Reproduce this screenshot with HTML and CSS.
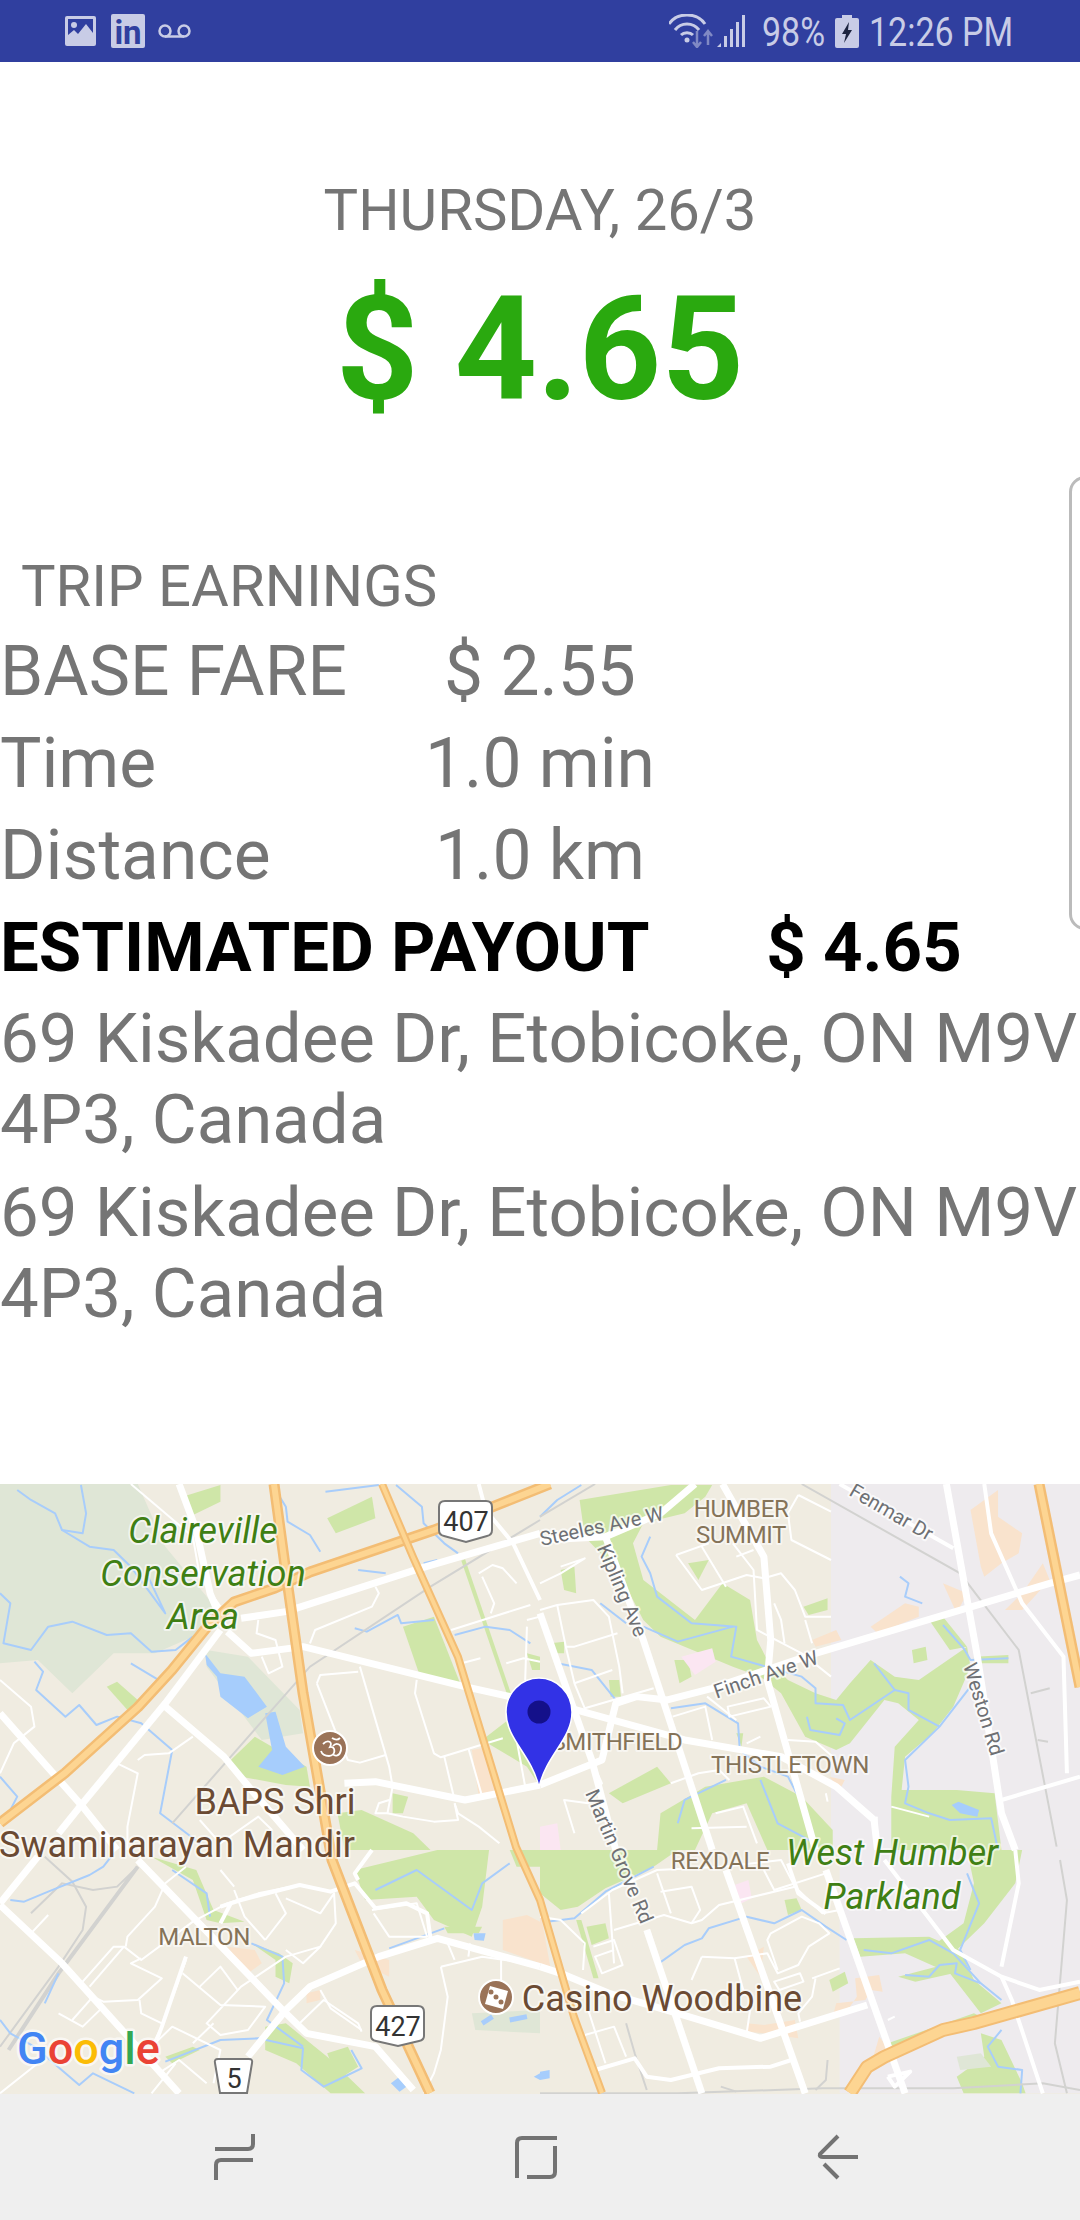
FILE: index.html
```html
<!DOCTYPE html>
<html lang="en">
<head>
    <meta charset="UTF-8">
    <meta name="viewport" content="width=device-width, initial-scale=1.0">
    <title>Trip Details</title>
    <link rel="stylesheet" href="styles.css">
</head>
<body>
    <div class="screen">
        <!-- Status bar -->
        <header class="status-bar">
            <div class="status-left">
                <svg class="ic-image" viewBox="0 0 31 30">
                    <rect width="31" height="30" rx="2" fill="#c8cce6"/>
                    <rect x="3" y="3" width="25" height="22" fill="#303f9f"/>
                    <path d="M3 25 L3 19 L9 14 L13 18 L21 8 L28 17 L28 25 Z" fill="#c8cce6"/>
                    <circle cx="9" cy="9" r="3" fill="#c8cce6"/>
                </svg>
                <div class="ic-linkedin">in</div>
                <svg class="ic-voicemail" viewBox="0 0 33 14">
                    <circle cx="7" cy="7" r="5.500"/>
                    <circle cx="26" cy="7" r="5.500"/>
                    <path d="M7 12.500 H26"/>
                </svg>
            </div>
            <div class="status-right">
                <svg class="ic-wifi" viewBox="0 0 45 34">
                    <path class="arc" d="M0 10 C8 -2 28 -2 36 10"/>
                    <path class="arc" d="M6 16 C12 8 24 8 30 16"/>
                    <path class="arc" d="M12 21 C15 18 21 18 24 21"/>
                    <circle cx="18" cy="26" r="2.500" fill="#c8cce6"/>
                    <path class="arrow" d="M28 17 V33 M24 28 L28 33 L32 28"/>
                    <path class="arrow" d="M39 31 V17 M35 22 L39 17 L43 22"/>
                </svg>
                <svg class="ic-signal" viewBox="0 0 32 32" fill="#c8cce6">
                    <path d="M0 32 L4 28 V32 Z"/>
                    <rect x="7" y="21" width="3" height="11"/>
                    <rect x="13" y="14" width="3" height="18"/>
                    <rect x="19" y="7" width="3" height="25"/>
                    <rect x="25" y="0" width="3" height="32"/>
                </svg>
                <span class="status-text status-pct">98%</span>
                <svg class="ic-battery" viewBox="0 0 24 33">
                    <path d="M7 0 H17 V3 H22 Q24 3 24 5 V31 Q24 33 22 33 H2 Q0 33 0 31 V5 Q0 3 2 3 H7 Z" fill="#c8cce6"/>
                    <path d="M14 7 L7 19 H11 L9 28 L17 15 H13 Z" fill="#1c2440"/>
                </svg>
                <span class="status-text status-time">12:26 PM</span>
            </div>
        </header>

        <main class="content">
            <section class="summary">
                <div class="summary-date">THURSDAY, 26/3</div>
                <div class="summary-amount">$ 4.65</div>
            </section>

            <section class="earnings">
                <h2 class="earnings-title">TRIP EARNINGS</h2>
                <div class="fare-row"><span>BASE FARE</span><span class="fare-value">$ 2.55</span></div>
                <div class="fare-row"><span>Time</span><span class="fare-value">1.0 min</span></div>
                <div class="fare-row"><span>Distance</span><span class="fare-value">1.0 km</span></div>
                <div class="fare-row payout"><span>ESTIMATED PAYOUT</span><span class="fare-value">$ 4.65</span></div>
                <p class="address">69 Kiskadee Dr, Etobicoke, ON M9V 4P3, Canada</p>
                <p class="address">69 Kiskadee Dr, Etobicoke, ON M9V 4P3, Canada</p>
            </section>

            <div class="side-tab"></div>
        </main>

        <!-- Map -->
        <svg class="map" viewBox="0 0 1080 610">
            <rect width="1080" height="610" fill="#f0ece1"/>

            <!-- areas and water, top left -->
            <g transform="translate(0,-4) scale(.3444,.3333)">
                <path class="wood" d="M0 12 H400 L480 200 L640 400 L560 470 L450 520 L330 520 L210 640 L110 540 L0 550 Z"/>
                <path class="wood" d="M600 510 L720 530 L870 690 L880 760 L760 780 L600 560 Z"/>
                <path class="park" d="M530 50 L640 15 L640 65 L550 110 Z"/>
                <path class="park" d="M950 115 L1080 50 L1090 115 L975 160 Z"/>
                <path class="park" d="M1170 440 L1260 410 L1340 620 L1220 590 Z"/>
                <path class="park" d="M670 840 L740 770 L890 860 L900 920 L830 915 L700 890 Z"/>
                <path class="park" d="M1140 940 L1185 950 L1170 1000 L1140 1000 Z"/>
                <path class="park" d="M980 1000 L1050 990 L1200 1060 L1250 1110 L1000 1110 Z"/>
                <path class="park" d="M310 620 L340 605 L400 660 L370 690 Z"/>
                <path class="park" d="M1530 520 L1568 530 V570 L1545 570 Z"/>
                <path class="park" d="M1400 780 L1500 700 L1568 850 V920 L1530 860 Z"/>
                <path class="peach" d="M1370 810 L1420 800 L1450 940 L1390 950 Z"/>
                <path class="park-line" d="M1345 240 L1550 860"/>
                <path class="lake" d="M595 520 L640 580 L710 590 L775 680 L720 715 L640 650 L630 590 L600 555 Z"/>
                <path class="lake" d="M770 700 L800 695 L830 800 L885 860 L820 885 L750 860 L790 810 Z"/>
                <path class="river" d="M50 30 L90 60 L160 100 L180 150 L240 160 L250 100 L235 15"/>
                <path class="river" d="M180 150 L260 200 L330 210 L380 260 L480 400 L430 290"/>
                <path class="river" d="M0 340 L30 370 L10 490 L90 510 L140 440 L210 425 L310 465 L380 460 L440 515 L510 510 L560 470"/>
                <path class="river" d="M100 545 L125 575 L105 630 L190 710 L230 675 L280 735 L340 710 L410 730 L500 810 L465 1000 L580 1090"/>
                <path class="river" d="M380 550 L460 600"/>
                <path class="river" d="M0 890 L50 950 L20 1010"/>
                <path class="river" d="M800 30 L830 80 L835 125 L900 165 L930 215"/>
                <path class="river" d="M945 35 L1100 15 M1040 270 L1120 280 M1230 250 L1270 240"/>
                <path class="river" d="M1150 15 L1225 80 L1230 130 L1290 190 L1330 220"/>
                <path class="river" d="M1030 445 L1065 455 L1155 405 L1165 430 L1260 420"/>
                <path class="river" d="M1320 465 L1410 440 L1480 450 L1540 490"/>
                <path class="rail" d="M500 1030 L900 560 L1250 320 L1568 120"/>
            </g>

            <!-- areas and water, top right -->
            <g transform="translate(540,-4) scale(.3444,.3333)">
                <rect x="845" y="12" width="723" height="1098" fill="#eeebee"/>
                <path class="park" d="M115 60 L380 15 L500 15 L480 50 L420 100 L300 130 L270 190 L300 300 L350 340 L450 420 L530 310 L610 360 L630 480 L660 540 L720 600 L800 640 L860 660 L900 610 L960 540 L1030 590 L1100 600 L1240 500 L1250 560 L1200 680 L1140 760 L1060 830 L1050 930 L1210 930 L1320 940 L1340 1110 L1020 1110 L1020 950 L1030 800 L1100 720 L1040 670 L1000 660 L900 790 L860 810 L770 770 L700 640 L640 590 L560 560 L420 500 L350 470 L300 420 L230 280 L130 170 Z"/>
                <path class="park" d="M60 270 L100 260 L105 340 L70 330 Z"/>
                <path class="park" d="M30 490 L70 485 L70 520 L30 520 Z"/>
                <path class="park" d="M200 600 L230 600 L235 650 L205 650 Z"/>
                <path class="park" d="M390 540 L430 540 L440 590 L405 610 Z"/>
                <path class="park" d="M765 380 L835 355 L835 390 L780 405 Z"/>
                <path class="park" d="M1080 510 L1120 500 L1125 540 L1085 550 Z"/>
                <path class="park" d="M1130 420 L1170 410 L1240 500 L1190 510 Z"/>
                <path class="park" d="M1260 530 L1360 525 L1360 550 L1260 550 Z"/>
                <path class="park" d="M430 250 L490 240 L460 300 Z"/>
                <path class="park" d="M200 940 L340 860 L380 910 L240 970 Z"/>
                <path class="park" d="M350 1000 L480 920 L650 890 L760 950 L850 1050 V1110 L340 1110 Z"/>
                <path class="land" d="M500 1000 L600 970 L660 1110 H450 Z"/>
                <path class="park" d="M570 760 L590 760 L585 800 Z"/>
                <path class="blush" d="M410 530 L500 505 L510 545 L450 585 Z"/>
                <path class="blush" d="M0 1040 L50 1030 L60 1110 H0 Z"/>
                <path class="peach" d="M790 480 L860 450 L875 480 L800 500 Z"/>
                <path class="peach" d="M960 440 L1060 370 L1100 380 L1100 410 L980 460 Z"/>
                <path class="peach" d="M1170 310 L1240 340 L1210 400 Z"/>
                <path class="peach" d="M1250 90 L1330 30 L1330 110 L1400 160 L1390 220 L1340 250 L1290 290 L1280 260 Z"/>
                <path class="peach" d="M1350 390 L1400 340 L1460 250 L1480 300 L1400 390 Z"/>
                <path class="peach" d="M840 890 L885 900 L870 930 Z"/>
                <path class="river" d="M0 110 L50 60 L120 15"/>
                <path class="river" d="M320 170 L295 230 L320 280 L340 350 L440 430 L570 440 L555 530 L640 555 L760 590 L800 625 L800 670 L880 675 L900 720 L1030 630 L1070 640 L1070 690 L1160 740 L1250 620 M1160 740 L1060 840 L1070 920 L1060 970 L1130 1000 L1190 1020 L1310 1015 L1330 1110"/>
                <path class="river" d="M775 710 L785 750 L870 765 L885 730 L860 715"/>
                <path class="river" d="M970 550 L1030 630"/>
                <path class="river" d="M175 370 L250 430 M300 440 L400 485 L560 440"/>
                <path class="river" d="M50 550 L150 570 L220 660"/>
                <path class="river" d="M380 685 L480 670 L575 730 L580 810 L640 860 L720 890 L745 940"/>
                <path class="river" d="M400 1030 L420 960 L540 900 M640 900 L690 1030 L800 1090"/>
                <path class="river" d="M1045 290 L1070 310 L1060 350 L1110 370"/>
                <path class="river" d="M1170 435 L1230 505 L1250 540 L1360 535"/>
                <path class="lake" d="M1195 975 L1215 965 L1275 990 L1270 1010 L1220 1000 Z"/>
                <path class="rail" d="M760 12 L1220 280 L1390 510 L1500 1100"/>
                <path class="rail" d="M1425 640 L1480 625 M1445 780 L1475 785"/>
                <path class="rail" d="M0 110 L160 12"/>
            </g>

            <!-- areas and water, bottom left -->
            <g transform="translate(0,366) scale(.3444,.3333)">
                <path class="park" d="M440 20 L570 60 L620 180 L710 215 L640 220 L600 210 L560 90 Z"/>
                <path class="park" d="M730 280 L810 310 L850 340 L840 400 L800 380 L800 330 Z"/>
                <path class="park" d="M770 530 L830 520 L950 620 L1060 730 L960 730 L860 640 L770 600 Z"/>
                <path class="park" d="M950 610 L1010 590 L1040 650 L980 690 Z"/>
                <path class="park" d="M480 620 L560 590 L580 600 L500 640 Z"/>
                <path class="park" d="M1030 60 L1270 0 L1420 0 L1400 170 L1370 260 L1260 210 L1210 140 L1060 150 Z"/>
                <path class="park" d="M1290 230 L1400 230 L1390 250 L1300 250 Z"/>
                <path class="park" d="M1480 0 L1568 0 V50 L1500 50 Z"/>
                <path class="peach" d="M660 290 L740 300 L760 340 L720 370 Z"/>
                <path class="peach" d="M1460 210 L1530 195 L1568 215 V340 L1460 300 Z"/>
                <path class="peach" d="M890 430 L930 420 L930 450 L890 460 Z"/>
                <path class="peach" d="M1030 300 L1130 330 L1130 380 L1050 340 Z"/>
                <path class="wood" d="M1370 490 L1568 480 V550 L1380 540 Z"/>
                <path class="rail" d="M0 590 L170 350 L240 240 L250 170 L210 95 L130 20"/>
                <path class="rail rail-wide" d="M25 600 L170 370 L400 50"/>
                <path class="rail" d="M90 190 L180 100 L270 120 L340 110 L400 50"/>
                <path class="river" d="M30 150 L70 155 L140 125 L260 75 L300 50 L330 10"/>
                <path class="river" d="M0 510 L30 550 L100 590 L230 705 L270 670 L390 730"/>
                <path class="river" d="M480 635 L640 570 L750 565 L880 595 L875 660 L940 710 L980 690 L1050 655 L1020 600"/>
                <path class="river" d="M730 280 L820 320 L825 400 L775 510 L880 590"/>
                <path class="river" d="M500 60 L600 130 L610 200"/>
                <path class="river" d="M1130 295 L1290 235 M1090 120 L1210 60 L1370 180 L1400 100 L1480 40"/>
                <path class="river" d="M170 370 L130 460"/>
                <path class="river-wide" d="M1400 520 L1430 500 M1480 510 L1530 500"/>
                <path class="lake" d="M1375 250 L1410 250 L1405 272 L1378 270 Z"/>
                <path class="lake" d="M1135 700 L1160 680 L1180 710 L1160 725 Z"/>
                <path class="lake" d="M1550 680 L1568 670 V690 Z"/>
            </g>

            <!-- areas and water, bottom right -->
            <g transform="translate(540,366) scale(.3444,.3333)">
                <rect x="870" y="0" width="698" height="730" fill="#eeebee"/>
                <path class="park" d="M0 0 H400 L330 50 L190 115 L110 170 L60 180 L0 130 Z"/>
                <path class="park" d="M710 150 L745 145 L760 180 L720 195 Z"/>
                <path class="park" d="M135 230 L190 220 L200 265 L150 285 Z"/>
                <path class="park" d="M105 210 L120 210 L170 385 L155 385 Z"/>
                <path class="park" d="M840 390 L885 365 L895 400 L850 425 Z"/>
                <path class="park" d="M1240 0 H1400 L1380 100 L1290 220 L1210 300 L1150 280 L1230 220 L1260 100 Z"/>
                <path class="park" d="M910 265 L1130 260 L1220 300 L1260 390 L1340 460 L1280 490 L1190 370 L1060 310 L930 320 Z"/>
                <path class="park" d="M1040 380 L1170 345 L1200 370 L1090 395 Z"/>
                <path class="park" d="M1010 580 L1260 490 L1280 500 L1040 610 Z"/>
                <path class="park" d="M1280 550 L1340 570 L1400 700 L1410 730 H1230 L1210 680 L1290 620 Z"/>
                <path class="wood" d="M1210 620 L1280 610 L1310 650 L1220 660 Z"/>
                <path class="blush" d="M565 105 L605 90 L615 145 L585 160 Z"/>
                <path class="peach" d="M915 385 L985 375 L995 425 L960 420 L945 450 L860 460 L850 500 L900 470 L920 440 Z"/>
                <path class="peach" d="M600 520 L650 525 L740 510 L750 565 L650 550 L605 545 Z"/>
                <path class="peach" d="M600 320 L650 290 L640 380 Z"/>
                <path class="peach" d="M965 630 L985 560 L1015 600 Z"/>
                <path class="peach" d="M0 180 L30 350 L0 340 Z"/>
                <path class="river" d="M20 215 L100 205 L190 125 L330 50"/>
                <path class="river" d="M345 340 L420 285 L470 265 L490 235 L600 200 L680 220 L760 180 L830 230 L890 270"/>
                <path class="river" d="M940 300 L1020 310 L1130 270 L1200 310 L1280 400 L1340 450"/>
                <path class="river" d="M1060 375 L1130 380 L1160 345 L1210 340 L1205 370 L1280 400"/>
                <path class="river" d="M1240 70 L1275 160 L1220 300 L1250 360"/>
                <path class="river" d="M1340 540 L1300 590 L1330 650 L1400 660 L1395 730"/>
                <path class="lake" d="M0 665 L28 660 L28 685 L0 690 Z"/>
                <path class="rail" d="M0 730 H400 L820 715 H1200 L1460 700 L1568 720"/>
                <path class="rail" d="M250 520 L275 610 L310 720 M525 710 L570 725 M835 630 L830 690 L800 720"/>
                <path class="rail" d="M1510 30 L1530 150 L1495 580 L1530 730"/>
            </g>

            <!-- roads, top left -->
            <g transform="translate(0,-4) scale(.3444,.3333)">
                <path class="minor" d="M380 12 L560 170 L580 290 L640 380"/>
                <path class="minor" d="M750 420 L745 460 L800 480 L820 560 L780 580 L760 530"/>
                <path class="minor" d="M900 490 L915 450 L1080 380 L1100 340 L1090 320"/>
                <path class="minor" d="M1045 560 L1130 860 L1140 920 L1125 1000 L1090 1000 L1100 970 L1130 960"/>
                <path class="minor" d="M920 610 L930 585 L1040 575"/>
                <path class="minor" d="M920 610 L980 770 L1010 840 L1045 848 L1120 825"/>
                <path class="minor" d="M1210 600 L1205 640 L1260 820 L1280 832 L1460 775"/>
                <path class="minor" d="M1290 830 L1320 960 M1360 805 L1400 950"/>
                <path class="minor" d="M1310 450 L1540 375 M1395 535 L1340 550"/>
                <path class="minor" d="M1390 280 L1430 255 L1460 265 L1500 310 M1400 290 L1435 370 L1425 400"/>
                <path class="minor" d="M1530 420 L1568 410 M1530 440 L1525 600 M1470 550 L1520 535 L1568 545"/>
                <path class="minor" d="M1500 780 L1525 920"/>
                <path class="minor" d="M1320 970 L1330 1000 L1390 1040 L1450 1090"/>
                <path class="minor" d="M1320 970 L1330 1020 L1260 1025 L1170 1010 L1125 1000"/>
                <path class="minor" d="M0 600 L90 680 L100 740 L40 790 L0 880"/>
                <path class="minor" d="M340 850 L400 880 L370 1040 L370 1110"/>
                <path class="minor" d="M400 840 L420 825 L490 820 L560 770"/>
                <path class="minor" d="M580 1020 L640 1090 L750 1010 L790 1050"/>
                <path class="road" d="M520 12 L570 150 L610 340 L650 440"/>
                <path class="road thin" d="M1390 12 L1410 90 L1490 190 L1568 360"/>
                <path class="road" d="M0 700 L240 980 L340 1110"/>
                <path class="road" d="M480 680 L650 830 L730 930 L880 1110"/>
                <path class="road" d="M640 450 L480 670 L240 970 L170 1060"/>
                <path class="road" d="M700 415 L830 395 L1220 265 L1568 160"/>
                <path class="road" d="M660 455 L730 520 L880 500 L1350 620 L1568 670"/>
                <path class="road" d="M1000 910 L1090 905 L1350 960 L1568 915"/>
            </g>

            <!-- roads, top right -->
            <g transform="translate(540,-4) scale(.3444,.3333)">
                <path class="minor" d="M0 310 L60 280 L130 235 L60 260 M0 390 L50 375 L155 360 L200 410 L230 560 L240 640"/>
                <path class="minor" d="M50 375 L75 500 L100 500 L225 460 M75 500 L100 610 L130 685 L330 625"/>
                <path class="minor" d="M100 610 L210 570"/>
                <path class="minor" d="M395 225 L470 330 L600 285 L650 295 L700 280 L740 330 L770 410 L845 410"/>
                <path class="minor" d="M395 225 L490 190 M470 200 L540 320 M570 230 L620 210"/>
                <path class="minor" d="M560 190 L620 270 L630 450 L760 520 L845 590"/>
                <path class="minor" d="M680 370 L700 420 L710 490 M770 420 L790 490"/>
                <path class="minor" d="M750 45 L845 95 M750 45 L720 100 L730 180 L845 240"/>
                <path class="minor" d="M545 680 L650 655 L670 680 L550 710 Z"/>
                <path class="minor" d="M385 710 L480 680 L500 780 M485 650 L570 720"/>
                <path class="minor" d="M600 790 L640 770 M720 780 L800 785 L850 830"/>
                <path class="minor" d="M140 820 L180 910 L140 970 L70 960 L100 1060"/>
                <path class="minor" d="M380 910 L460 880 L520 870 L550 900"/>
                <path class="minor" d="M510 1000 L590 980 L630 1090 M440 1045 L600 1040"/>
                <path class="minor" d="M830 940 L835 965"/>
                <path class="minor" d="M1130 1010 L1020 980"/>
                <path class="minor" d="M978 1010 L975 1060"/>
                <path class="road" d="M0 400 L150 840 L220 1110"/>
                <path class="road" d="M190 170 L300 480 L500 1110"/>
                <path class="road" d="M530 12 L650 230 L670 480 L660 600 L800 1110"/>
                <path class="road" d="M1180 12 L1270 530 L1340 1000 L1380 1110"/>
                <path class="road thin" d="M1290 12 L1310 160 L1400 370 L1520 530 L1530 880"/>
                <path class="road thin" d="M870 12 L1200 205"/>
                <path class="road" d="M0 180 L190 170 L350 100 L450 12"/>
                <path class="road" d="M0 660 L420 780 L700 830 L860 920 L970 1020 L980 1110"/>
                <path class="road" d="M0 915 L180 840 L220 670 L280 650 L370 660 L500 625 L800 520 L1480 310 L1568 285"/>
                <path class="road thin" d="M1340 960 L1568 890"/>
            </g>

            <!-- roads, bottom left -->
            <g transform="translate(0,366) scale(.3444,.3333)">
                <path class="minor" d="M90 250 L140 195"/>
                <path class="minor" d="M240 395 L330 290 L360 290 L410 330 L560 215 L660 160 L750 130 L870 105 L960 125"/>
                <path class="minor" d="M210 510 L270 440 L300 455 L400 450 L470 385 L380 340 L410 325"/>
                <path class="minor" d="M260 410 L360 290 M365 290 L370 260 L450 170 L480 100 L540 50"/>
                <path class="minor" d="M170 490 L240 530 L300 470 M405 450 L410 490 L470 520"/>
                <path class="minor" d="M540 330 L470 530 L440 590 L500 530 L640 600 L620 700"/>
                <path class="minor" d="M530 370 L640 465 L770 470 L720 540 L640 555 L600 520 L700 410 L830 320 L930 290 L880 340 L830 300"/>
                <path class="minor" d="M580 410 L640 350 L690 420 M620 520 L560 580"/>
                <path class="minor" d="M870 520 L940 450 L1040 520 L1050 545"/>
                <path class="minor" d="M800 130 L830 190 L770 270 M830 145 L930 190 L970 130 L975 220 L930 290"/>
                <path class="minor" d="M1080 180 L1210 160 L1240 260 L1130 260 L1085 190"/>
                <path class="minor" d="M680 120 L710 200 L770 270 M680 110 L640 60"/>
                <path class="minor" d="M930 420 L960 475 L1050 540"/>
                <path class="minor" d="M1280 350 L1300 440 L1280 600 L1260 670 L1230 730"/>
                <path class="minor" d="M1280 350 L1400 320 L1568 345 M1455 320 V390"/>
                <path class="minor" d="M1300 280 L1320 330 M1365 280 L1360 320"/>
                <path class="minor" d="M460 670 L520 630 L600 700 M0 730 L110 640 M440 730 L510 640"/>
                <path class="road thin" d="M540 320 L470 530 L455 570"/>
                <path class="road thin" d="M640 170 L700 150 L870 105 L960 125 L1030 100 L1090 175 L1180 160 L1240 190 L1250 265"/>
                <path class="road thin" d="M1040 90 L1030 70 L1080 0"/>
                <path class="road" d="M0 165 L180 340 L520 730"/>
                <path class="road" d="M400 30 L830 490 L890 550 L1090 590 L1200 720"/>
                <path class="road" d="M110 20 L0 160"/>
                <path class="road" d="M720 620 L830 480 L900 410 L1100 320 L1270 265 L1568 350"/>
                <path class="road thin" d="M640 220 L670 160"/>
            </g>

            <!-- roads, bottom right -->
            <g transform="translate(540,366) scale(.3444,.3333)">
                <path class="minor" d="M0 200 L60 210 L130 280 L125 360"/>
                <path class="minor" d="M120 190 L210 120 L340 60 L530 50 L700 30 L740 110 L820 190 L870 180"/>
                <path class="minor" d="M155 290 L215 270 L240 345 L180 370 L160 320 L215 300"/>
                <path class="minor" d="M215 240 L360 195 L440 220 L470 210 L520 165 L740 110"/>
                <path class="minor" d="M200 130 L215 340 M340 70 L380 190 M350 125 L440 110 L465 180 L440 220"/>
                <path class="minor" d="M470 320 L565 325 L660 310 L690 370 L750 345 L780 290 L840 250 L810 220 L760 200 L670 250 L660 270 L690 360"/>
                <path class="minor" d="M470 320 L440 390 M565 325 L590 420"/>
                <path class="minor" d="M680 395 L755 370 L765 395 L695 420 Z M790 385 L870 355 M800 385 L790 440 L750 490 L755 515"/>
                <path class="minor" d="M610 480 L600 550 M130 555 L215 530 L250 620"/>
                <path class="minor" d="M140 480 L190 640 M650 60 L680 120 L830 70"/>
                <path class="minor" d="M1010 510 L1030 500"/>
                <path class="road thin" d="M160 660 L275 625 L310 680 L380 690 L520 655 L670 650 L730 630"/>
                <path class="road thin" d="M1010 680 L1075 665 L1030 710 L1010 680"/>
                <path class="road" d="M310 240 L470 730"/>
                <path class="road" d="M540 60 L770 730"/>
                <path class="road" d="M830 60 L1060 730"/>
                <path class="road" d="M0 350 L60 370 L200 430 L400 490 L640 565 L950 465"/>
                <path class="road thin" d="M1000 30 L1200 300 L1340 380 L1450 420 L1568 395"/>
                <path class="road thin" d="M1340 380 L1370 450 L1460 730"/>
                <path class="road thin" d="M1380 0 L1390 100 L1340 350"/>
                <path class="road thin" d="M720 40 L750 130 L830 190"/>
            </g>

            <!-- highways -->
            <path class="hw-out" d="M0 339 L65 289 L138 223 L172 186 L207 143 L234 118 L275 104 L310 88 L434 46 L550 0"/>
            <path class="hw-in" d="M0 339 L65 289 L138 223 L172 186 L207 143 L234 118 L275 104 L310 88 L434 46 L550 0"/>
            <path class="hw-out" d="M274 0 L286 89 L303 209 L332 376 L382 506 L430 609"/>
            <path class="hw-in" d="M274 0 L286 89 L303 209 L332 376 L382 506 L430 609"/>
            <path class="hw-out narrow" d="M382 0 L413 73 L458 173 L516 363 L540 416 L574 533 L602 609"/>
            <path class="hw-in narrow" d="M382 0 L413 73 L458 173 L516 363 L540 416 L574 533 L602 609"/>
            <path class="hw-out" d="M1039 0 L1080 203"/>
            <path class="hw-in" d="M1039 0 L1080 203"/>
            <path class="hw-out wide" d="M1080 509 L974 539 L943 546 L884 573 L867 583 L850 609"/>
            <path class="hw-in wide" d="M1080 509 L974 539 L943 546 L884 573 L867 583 L850 609"/>

            <!-- place names -->
            <g class="label-green">
                <text x="203" y="59">Claireville</text>
                <text x="203" y="102">Conservation</text>
                <text x="203" y="145">Area</text>
                <text x="892" y="381">West Humber</text>
                <text x="892" y="425">Parkland</text>
            </g>
            <g class="label-poi">
                <text x="275" y="330">BAPS Shri</text>
                <text x="177" y="373">Swaminarayan Mandir</text>
                <text x="662" y="527">Casino Woodbine</text>
            </g>
            <g class="label-area">
                <text x="741" y="33">HUMBER</text>
                <text x="741" y="59">SUMMIT</text>
                <text x="617" y="266">SMITHFIELD</text>
                <text x="790" y="289">THISTLETOWN</text>
                <text x="720" y="385">REXDALE</text>
                <text x="204" y="461">MALTON</text>
            </g>
            <g class="label-road">
                <text transform="translate(603,49) rotate(-12)">Steeles Ave W</text>
                <text transform="translate(616,109) rotate(67)">Kipling Ave</text>
                <text transform="translate(768,197) rotate(-19)">Finch Ave W</text>
                <text transform="translate(888,34) rotate(30)">Fenmar Dr</text>
                <text transform="translate(977,227) rotate(73)">Weston Rd</text>
                <text transform="translate(613,375) rotate(67)">Martin Grove Rd</text>
            </g>

            <!-- route shields -->
            <path class="shield" d="M445 17 H486 Q492 17 492 23 V46 Q492 51 487 52 L466 58 L444 52 Q439 51 439 46 V23 Q439 17 445 17 Z"/>
            <text class="shield-text" x="466" y="47">407</text>
            <path class="shield" d="M377 522 H418 Q424 522 424 528 V552 Q424 556 419 557 L398 562 L376 557 Q371 556 371 552 V528 Q371 522 377 522 Z"/>
            <text class="shield-text" x="398" y="552">427</text>
            <path class="shield" d="M218 575 H249 Q253 575 252 579 L247 609 H220 L215 579 Q214 575 218 575 Z"/>
            <text class="shield-text" x="234" y="604">5</text>

            <!-- poi markers -->
            <circle class="poi" cx="330" cy="264" r="17"/>
            <path class="poi-om" d="M323 260 C328 255 333 258 330 263 C336 262 336 272 329 272 C325 272 322 270 321 267 M333 262 C336 258 342 260 341 266 C340 272 335 273 333 270 M332 254 C335 256 338 256 340 254"/>
            <circle class="poi" cx="496" cy="513" r="17"/>
            <path d="M490 502 L508 507 L503 525 L485 520 Z" fill="#fff"/>
            <circle cx="491" cy="508" r="2.500" fill="#9a7358"/>
            <circle cx="496" cy="513" r="2.500" fill="#9a7358"/>
            <circle cx="501" cy="518" r="2.500" fill="#9a7358"/>

            <!-- google logo -->
            <text class="google" x="17" y="580"><tspan fill="#4285f4">G</tspan><tspan fill="#ea4335">o</tspan><tspan fill="#fbbc05">o</tspan><tspan fill="#4285f4">g</tspan><tspan fill="#34a853">l</tspan><tspan fill="#ea4335">e</tspan></text>

            <!-- trip pin -->
            <path class="pin" d="M539 194 C521 194 506 209 506 228 C506 255 531 270 539 303 C547 270 572 255 572 228 C572 209 557 194 539 194 Z"/>
            <circle cx="539" cy="228" r="11.500" fill="#14108a"/>
        </svg>

        <!-- Navigation bar -->
        <nav class="nav-bar">
            <svg class="nav-icon" viewBox="0 0 44 48">
                <path d="M41 1 V11 Q41 16 36 16 H3"/>
                <path d="M41 27 H9 Q4 27 4 32 V47"/>
            </svg>
            <svg class="nav-icon" viewBox="0 0 44 48">
                <path d="M3 45 V10 Q3 5 8 5 H43"/>
                <path d="M41 13 V39 Q41 44 36 44 H13"/>
            </svg>
            <svg class="nav-icon" viewBox="0 0 44 48">
                <path d="M22 3 L4 21 Q3 24 7 24 H42"/>
                <path d="M8 31 L22 45"/>
            </svg>
        </nav>
    </div>
</body>
</html>
```

FILE: styles.css
```css
body {
    margin: 0;
    padding: 0;
    background-color: #fff;
    font-family: Roboto, "Noto Sans", sans-serif;
}
.screen {
    display: flex;
    flex-direction: column;
    width: 1080px;
    height: 2220px;
    overflow: hidden;
}

/* status bar */
.status-bar {
    display: flex;
    justify-content: space-between;
    align-items: center;
    flex: 0 0 62px;
    padding: 0 70px 0 65px;
    background-color: #303f9f;
    color: #c8cce6;
}
.status-left, .status-right {
    display: flex;
    align-items: center;
}
.ic-image {
    width: 31px;
    height: 30px;
    margin-right: 15px;
}
.ic-linkedin {
    width: 34px;
    height: 34px;
    margin-right: 13px;
    border-radius: 2px;
    background-color: #c8cce6;
    color: #303f9f;
    font-size: 33px;
    font-weight: 700;
    line-height: 38px;
    text-align: center;
}
.ic-voicemail {
    width: 33px;
    height: 14px;
    fill: none;
    stroke: #c8cce6;
    stroke-width: 2.500;
}
.ic-wifi {
    width: 45px;
    height: 34px;
    margin-right: 3px;
    fill: none;
}
.ic-wifi .arc {
    stroke: #c8cce6;
    stroke-width: 3;
}
.ic-wifi .arrow {
    stroke: #8089c4;
    stroke-width: 2.500;
}
.ic-signal {
    width: 32px;
    height: 32px;
    margin-right: 13px;
}
.ic-battery {
    width: 24px;
    height: 33px;
    margin: 0 10px 0 12px;
}
/* the phone draws these narrower than Roboto */
.status-text {
    margin-top: 4px;
    font-size: 40px;
    line-height: 44px;
    white-space: nowrap;
    transform: scaleX(.85);
    transform-origin: left center;
}
.status-pct {
    width: 61px;
}
.status-time {
    width: 141px;
}

/* summary */
.content {
    position: relative;
    flex: 1;
    color: #757575;
}
.summary {
    padding-top: 114px;
    text-align: center;
}
.summary-date {
    font-size: 58px;
}
.summary-amount {
    margin-top: 21px;
    color: #2aa90f;
    font-size: 144px;
    font-weight: 700;
}

/* earnings */
.earnings {
    margin-top: 118px;
}
.earnings-title {
    margin: 0;
    padding-left: 21px;
    font-size: 58px;
    font-weight: 400;
}
.fare-row {
    display: grid;
    grid-template-columns: 300px 480px;
    height: 92px;
    padding-top: 11px;
    box-sizing: border-box;
    font-size: 69.500px;
    white-space: nowrap;
}
.fare-value {
    text-align: center;
}
.payout {
    grid-template-columns: 648px 432px;
    height: 90px;
    color: #000;
    font-size: 69px;
    font-weight: 700;
}
.address {
    margin: 12px 0 0;
    font-size: 69px;
    line-height: 81px;
}
.side-tab {
    position: absolute;
    top: 414px;
    right: -23px;
    width: 28px;
    height: 448px;
    border: 3px solid #bbb;
    border-radius: 16px;
}

/* map */
.map {
    display: block;
    flex: 0 0 610px;
    width: 1080px;
    height: 610px;
}
.land { fill: #f0ece1; }
.wood { fill: #dfe6d6; }
.park { fill: #cfe6a8; }
.peach { fill: #f9e3cd; }
.blush { fill: #fbe6f2; }
.lake { fill: #a6cdfc; }
.park-line {
    fill: none;
    stroke: #cfe6a8;
    stroke-width: 4;
    vector-effect: non-scaling-stroke;
}
.river, .river-wide {
    fill: none;
    stroke: #a8cdfb;
    stroke-width: 2;
    stroke-linejoin: round;
    vector-effect: non-scaling-stroke;
}
.river-wide { stroke-width: 5; }
.rail {
    fill: none;
    stroke: #d2d2d0;
    stroke-width: 2;
    vector-effect: non-scaling-stroke;
}
.rail-wide { stroke-width: 4; }
.minor, .road {
    fill: none;
    stroke: #fff;
    stroke-linejoin: round;
    vector-effect: non-scaling-stroke;
}
.minor { stroke-width: 2; }
.road { stroke-width: 7; }
.road.thin { stroke-width: 4; }
.hw-out, .hw-in {
    fill: none;
    stroke-linejoin: round;
}
.hw-out {
    stroke: #f3bd74;
    stroke-width: 11;
}
.hw-in {
    stroke: #fdd592;
    stroke-width: 6;
}
.hw-out.narrow { stroke-width: 8; }
.hw-in.narrow { stroke-width: 4; }
.hw-out.wide { stroke-width: 14; }
.hw-in.wide { stroke-width: 10; }

.map text {
    font-family: Roboto, sans-serif;
    paint-order: stroke;
    stroke-linejoin: round;
}
.label-green text {
    fill: #3f7f14;
    stroke: rgba(255, 255, 255, .6);
    stroke-width: 4px;
    font-size: 36px;
    font-style: italic;
    text-anchor: middle;
}
.label-poi text {
    fill: #6b4a33;
    stroke: rgba(255, 255, 255, .6);
    stroke-width: 4px;
    font-size: 36px;
    text-anchor: middle;
}
.label-area text {
    fill: #857358;
    stroke: rgba(255, 255, 255, .5);
    stroke-width: 4px;
    font-size: 24px;
    letter-spacing: -.4px;
    text-anchor: middle;
}
.label-road text {
    fill: #6e7074;
    stroke: rgba(255, 255, 255, .7);
    stroke-width: 4px;
    font-size: 20px;
    text-anchor: middle;
}
.shield {
    fill: #fff;
    stroke: #777;
    stroke-width: 2;
}
.map .shield-text {
    fill: #333;
    font-size: 27px;
    text-anchor: middle;
}
.poi {
    fill: #9a7358;
    stroke: #fff;
    stroke-width: 2;
}
.poi-om {
    fill: none;
    stroke: #fff;
    stroke-width: 1.800;
}
.map .google {
    stroke: rgba(255, 255, 255, .65);
    stroke-width: 5px;
    font-size: 45px;
    font-weight: 500;
}
.pin {
    fill: #3232e6;
    stroke: #fff;
    stroke-width: 1.500;
}

/* navigation bar */
.nav-bar {
    display: grid;
    grid-template-columns: repeat(3, 302px);
    justify-content: center;
    justify-items: center;
    align-items: center;
    flex: 0 0 126px;
    padding-right: 9px;
    background-color: #efefef;
}
.nav-icon {
    width: 44px;
    height: 48px;
    fill: none;
    stroke: #737373;
    stroke-width: 4;
}
```
